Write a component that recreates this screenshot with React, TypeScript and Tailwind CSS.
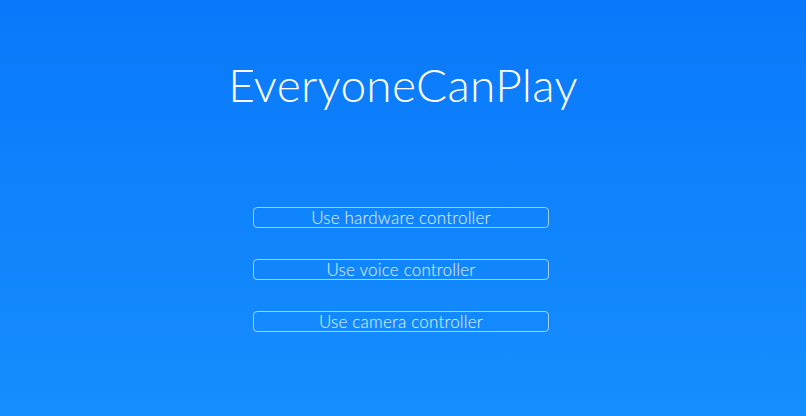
export default function App() {
  const options = ["Use hardware controller", "Use voice controller", "Use camera controller"];

  return (
    <div
      className="flex h-[416px] w-full flex-col items-center bg-gradient-to-b from-[#0a78fa] to-[#168efe] text-white"
      style={{ fontFamily: "Lato, 'Open Sans', sans-serif" }}
    >
      <h1 className="mt-[58px] text-[46px] font-light leading-[54px] tracking-[0.3px]">EveryoneCanPlay</h1>

      <div className="mt-[95px] flex flex-col gap-[31px] pr-[4px]">
        {options.map((label) => (
          <button
            key={label}
            className="h-[21px] w-[296px] rounded-[4px] border border-white/60 text-[17px] font-light leading-[19px] tracking-[0.2px] text-white/90"
          >
            {label}
          </button>
        ))}
      </div>
    </div>
  );
}
